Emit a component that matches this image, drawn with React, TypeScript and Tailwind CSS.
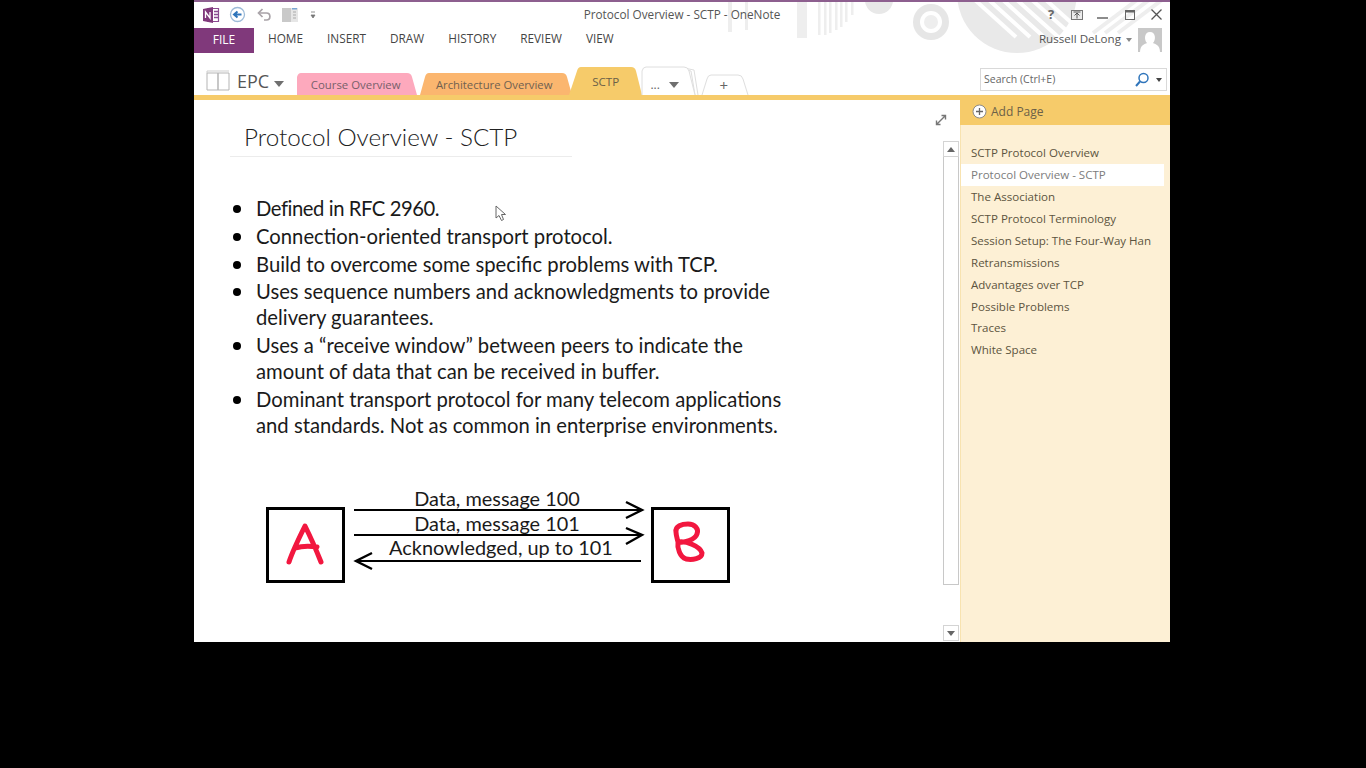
import React from 'react';

const ribbonTabs = ['HOME', 'INSERT', 'DRAW', 'HISTORY', 'REVIEW', 'VIEW'];
const pages = [
  'SCTP Protocol Overview',
  'Protocol Overview - SCTP',
  'The Association',
  'SCTP Protocol Terminology',
  'Session Setup: The Four-Way Han',
  'Retransmissions',
  'Advantages over TCP',
  'Possible Problems',
  'Traces',
  'White Space',
];
const bullets = [
  ['Defined in RFC 2960.'],
  ['Connection-oriented transport protocol.'],
  ['Build to overcome some specific problems with TCP.'],
  ['Uses sequence numbers and acknowledgments to provide', 'delivery guarantees.'],
  ['Uses a “receive window” between peers to indicate the', 'amount of data that can be received in buffer.'],
  ['Dominant transport protocol for many telecom applications', 'and standards. Not as common in enterprise environments.'],
];

function Backdrop() {
  return (
    <svg className="absolute left-0 top-0 pointer-events-none" width="976" height="56" viewBox="0 0 976 56">
      <g fill="#eeeeee">
        <rect x="534" y="0" width="4" height="32" />
        <rect x="551" y="0" width="3" height="30" />
        <rect x="603" y="0" width="10" height="38" />
        <rect x="624" y="0" width="2.5" height="35" />
        <rect x="630" y="0" width="2.5" height="35" />
        <rect x="635" y="0" width="2.5" height="33" />
        <rect x="641" y="0" width="2.5" height="30" />
        <rect x="646" y="0" width="2.5" height="27" />
        <rect x="651" y="0" width="2.5" height="22" />
        <rect x="657" y="0" width="2.5" height="15" />
      </g>
      <circle cx="685" cy="0" r="14" fill="#e8e8e8" />
      <circle cx="737" cy="22" r="18" fill="#e6e6e6" />
      <circle cx="737" cy="22" r="11" fill="#ffffff" />
      <circle cx="737" cy="22" r="7" fill="#eeeeee" />
      <circle cx="823" cy="-7" r="60" fill="#e9e9e9" />
      <g stroke="#ffffff" strokeWidth="4">
        <path d="M781 0 L822 37" />
        <path d="M795 0 L836 37" />
        <path d="M809 0 L850 37" />
        <path d="M823 0 L890 60" />
        <path d="M838 0 L890 46" />
        <path d="M852 0 L890 34" />
      </g>
      <g stroke="#eeeeee" strokeWidth="4">
        <path d="M899 33 L943 0" />
        <path d="M911 33 L955 0" />
        <path d="M924 33 L968 0" />
      </g>
    </svg>
  );
}

function OneNoteIcon() {
  return (
    <svg width="18" height="18" viewBox="0 0 18 18">
      <path d="M6 2.5 H16.5 V15.5 H6 Z" fill="#fff" stroke="#8b4a91" strokeWidth="1.2" />
      <path d="M12 5.5 h4 M12 8.5 h4 M12 11.5 h4" stroke="#8b4a91" strokeWidth="1.4" />
      <path d="M1 3 L11 1 V17 L1 15 Z" fill="#80397b" />
      <path d="M3.5 12 V6 L8 12 V6" stroke="#fff" strokeWidth="1.3" fill="none" />
    </svg>
  );
}

function QuickAccess() {
  return (
    <div className="flex items-center pl-[8px]">
      <OneNoteIcon />
      <svg className="ml-[9px]" width="17" height="17" viewBox="0 0 17 17">
        <circle cx="8.5" cy="8.5" r="7" fill="#fff" stroke="#9dbbd8" strokeWidth="1.3" />
        <path d="M12.5 8.5 H6 M8.5 5.5 L5 8.5 L8.5 11.5" fill="none" stroke="#2f75bb" strokeWidth="2" />
      </svg>
      <svg className="ml-[10px]" width="17" height="17" viewBox="0 0 17 17">
        <path d="M3 7 H10.5 C15 7 15 14 10.5 14 H8" fill="none" stroke="#a9a3a8" strokeWidth="1.7" />
        <path d="M6.5 3 L2.5 7 L6.5 11" fill="none" stroke="#a9a3a8" strokeWidth="1.7" />
      </svg>
      <svg className="ml-[9px]" width="16" height="14" viewBox="0 0 16 14">
        <rect x="0" y="0" width="9" height="14" fill="#c9c9c9" />
        <rect x="9" y="0" width="7" height="14" fill="#e6e6e6" />
        <rect x="10" y="0" width="5" height="1.5" fill="#7aa7d4" />
        <path d="M11 4 h3 M11 7 h3 M11 10 h3" stroke="#aaa" />
      </svg>
      <svg className="ml-[12px]" width="6" height="8" viewBox="0 0 6 8">
        <path d="M1 1 h4 M1 4 L5 4 L3 7 Z" stroke="#777" fill="#777" strokeWidth="0.8" />
      </svg>
    </div>
  );
}

function WindowControls() {
  return (
    <div className="flex items-center justify-end text-[#666]">
      <span className="w-[14px] text-center font-['Open_Sans',sans-serif] text-[13px] font-bold">?</span>
      <svg className="ml-[13px]" width="12" height="10" viewBox="0 0 12 10">
        <rect x="0.5" y="0.5" width="11" height="9" fill="#ececec" stroke="#777" />
        <path d="M6 8.5 V3.5 M3.5 5.5 L6 3 L8.5 5.5 M2.5 2 h7" fill="none" stroke="#555" />
      </svg>
      <svg className="ml-[14px]" width="11" height="11" viewBox="0 0 11 11">
        <path d="M0 9 H11" stroke="#666" strokeWidth="1.5" />
      </svg>
      <svg className="ml-[17px]" width="10" height="10" viewBox="0 0 10 10">
        <rect x="0.5" y="0.5" width="9" height="9" fill="none" stroke="#666" />
        <path d="M0 1.5 H10" stroke="#666" strokeWidth="2" />
      </svg>
      <svg className="ml-[16px] mr-[8px]" width="11" height="11" viewBox="0 0 11 11">
        <path d="M0.5 0.5 L10.5 10.5 M10.5 0.5 L0.5 10.5" stroke="#555" strokeWidth="1.3" />
      </svg>
    </div>
  );
}

function Caret({className}: {className?: string}) {
  return (
    <svg className={className} width="10" height="6" viewBox="0 0 10 6">
      <path d="M0 0 H10 L5 6 Z" fill="#6f6f6f" />
    </svg>
  );
}

function SectionTab(props: {
  label: string;
  width: number;
  height: number;
  left: number;
  right: number;
  fill: string;
  textClass: string;
  className?: string;
  stroke?: string;
  stacked?: boolean;
  children?: React.ReactNode;
}) {
  const {label, width, height, left, right, fill, textClass, className, stroke, stacked, children} = props;
  const path = `M0 ${height} L${left} 4 Q${left + 1} 0 ${left + 4} 0 L${width - right - 4} 0 Q${width - right} 0 ${width - right + 1} 4 L${width} ${height}`;
  return (
    <div className={`relative flex justify-center ${className ?? ''}`} style={{width, height}}>
      <svg className="absolute left-0 top-0 overflow-visible" width={width} height={height}>
        {stacked && (
          <path d={`M${width - right - 4} 1 L${width - 1} 3 L${width + 3} ${height}`} fill="none" stroke={stroke} />
        )}
        {stacked && (
          <path d={`M${width - right - 2} 3 L${width - 4} 4 L${width} ${height}`} fill="none" stroke={stroke} />
        )}
        <path d={path} fill={fill} stroke={stroke ?? 'none'} />
      </svg>
      <span className={`relative flex items-center gap-[9px] font-['Open_Sans',sans-serif] ${textClass}`}>
        {label}
        {children}
      </span>
    </div>
  );
}

function SectionBar() {
  return (
    <div className="flex h-[42px] items-end">
      <svg className="ml-[12px] mb-[4px]" width="24" height="21" viewBox="0 0 24 21">
        <path d="M1 3 H12 V20 H1 Z M12 3 H23 V20 H12 Z" fill="#fff" stroke="#b5b5b5" />
        <path d="M1 3 V1 H23" fill="none" stroke="#cfcfcf" />
      </svg>
      <span className="ml-[7px] mb-[1px] font-['Open_Sans',sans-serif] text-[18px] leading-[26px] text-[#555]">EPC</span>
      <Caret className="ml-[5px] mb-[8px]" />
      <div className="ml-[13px] flex items-end">
        <SectionTab label="Course Overview" width={120} height={22} left={0} right={6} fill="#fda9bd" textClass="mr-[3px] mt-[1px] text-[11.4px] leading-[21px] text-[#77606a]" />
        <SectionTab label="Architecture Overview" width={152} height={22} left={5} right={6} className="ml-[3px]" fill="#fbb66f" textClass="mr-[4px] mt-[1px] text-[11.3px] leading-[21px] text-[#70614f]" />
        <SectionTab label="SCTP" width={73} height={28} left={8} right={7} className="-ml-[3px]" fill="#f6cb6a" textClass="text-[11.6px] leading-[21px] text-[#6b6048]" />
        <SectionTab label="..." width={53} height={28} left={0} right={7} stacked fill="#fff" stroke="#dedede" textClass="mr-[8px] mt-[7px] text-[12px] leading-[21px] text-[#666]">
          <Caret />
        </SectionTab>
        <SectionTab label="+" width={46} height={20} left={5} right={6} className="ml-[7px]" fill="#fff" stroke="#dedede" textClass="mr-[3px] text-[15px] leading-[20px] text-[#666]" />
      </div>
      <div className="ml-auto mr-[3px] mb-[4px] flex h-[23px] w-[187px] items-center border border-[#d9d9d9] bg-white pl-[3px] pr-[4px]">
        <span className="flex-1 font-['Open_Sans',sans-serif] text-[10.5px] text-[#666]">Search (Ctrl+E)</span>
        <svg width="16" height="16" viewBox="0 0 16 16">
          <circle cx="9.5" cy="6" r="4.5" fill="none" stroke="#2f75bb" strokeWidth="1.5" />
          <path d="M6 9.5 L2 14" stroke="#2f75bb" strokeWidth="2" />
        </svg>
        <svg className="ml-[6px]" width="6" height="4" viewBox="0 0 6 4">
          <path d="M0 0 H6 L3 4 Z" fill="#444" />
        </svg>
      </div>
    </div>
  );
}

function Diagram() {
  const textClass = "font-['Lato',sans-serif] text-[19.9px] fill-[#1a1a1a]";
  return (
    <svg className="ml-[70px] mt-[48px]" width="470" height="100" viewBox="0 0 470 100">
      <g fill="none" stroke="#000">
        <rect x="3.5" y="22.5" width="76" height="73" strokeWidth="3" />
        <rect x="388.5" y="22.5" width="76" height="73" strokeWidth="3" />
        <path d="M90 24 H378 M90 49 H378 M377 75 H93" strokeWidth="2" />
        <path d="M362 16 L378 24 L362 32 M362 42 L378 49 L362 58 M108 67 L92 75 L108 83" strokeWidth="2.4" />
        <g stroke="#f2173f" strokeWidth="5" strokeLinecap="round" strokeLinejoin="round">
          <path d="M25 76 C29 64 36 50 41 40 C46 50 53 66 57 76 M31 62 C38 60 46 60 53 61" />
          <path d="M412 46 C411 40 418 38 424 38 C431 38 435 43 433 48 C431 54 420 57 415 56 C422 55 436 60 438 67 C438 73 428 74 422 73 C416 71 413 62 414 56 C413 52 412 49 412 46 Z" />
        </g>
      </g>
      <text x="233" y="20" textAnchor="middle" className={textClass}>Data, message 100</text>
      <text x="233" y="45" textAnchor="middle" className={textClass}>Data, message 101</text>
      <text x="237" y="69" textAnchor="middle" className={textClass}>Acknowledged, up to 101</text>
    </svg>
  );
}

function NotePage() {
  return (
    <div className="relative flex-1">
      <svg className="absolute left-[741px] top-[14px]" width="12" height="12" viewBox="0 0 12 12">
        <path d="M2 10 L10 2 M6.5 1.5 H10.5 V5.5 M1.5 6.5 V10.5 H5.5" fill="none" stroke="#777" strokeWidth="1.4" />
      </svg>
      <svg className="absolute left-[301px] top-[105px]" width="12" height="17" viewBox="0 0 12 17">
        <path d="M1 1 V13 L4 10.5 L6.5 15.5 L8.5 14.5 L6.5 9.5 L10.5 9.5 Z" fill="#fff" stroke="#666" />
      </svg>
      <div className="ml-[36px] mt-[21px] w-[342px] border-b border-[#ececec] pb-[4px] pl-[14px]">
        <h1 className="font-['Lato',sans-serif] text-[24.25px] font-light leading-[31px] text-[#222]">Protocol Overview - SCTP</h1>
      </div>
      <ul className="ml-[39px] mt-[38px] font-['Lato',sans-serif] text-[20.25px] leading-[26px] text-[#1a1a1a]">
        {bullets.map((lines, i) => (
          <li key={lines[0]} className={i === 0 ? 'mb-[1.75px] flex tracking-[-0.45px]' : 'mb-[1.75px] flex'}>
            <span className="mt-[10px] h-[8px] w-[8px] shrink-0 rounded-full bg-black" />
            <div className="ml-[15px]">
              {lines.map((line) => (
                <div key={line} className="whitespace-nowrap">{line}</div>
              ))}
            </div>
          </li>
        ))}
      </ul>
      <Diagram />
    </div>
  );
}

function Scrollbar() {
  return (
    <div className="mr-[1px] flex w-[16px] flex-col pt-[41px] pb-[1px]">
      <div className="flex h-[16px] items-center justify-center border border-[#d4d4d4] bg-white">
        <svg width="8" height="5" viewBox="0 0 8 5"><path d="M0 5 H8 L4 0 Z" fill="#666" /></svg>
      </div>
      <div className="h-[428px] border border-t-0 border-[#c8c8c8] bg-white" />
      <div className="flex-1" />
      <div className="flex h-[16px] items-center justify-center border border-[#d4d4d4] bg-white">
        <svg width="8" height="5" viewBox="0 0 8 5"><path d="M0 0 H8 L4 5 Z" fill="#666" /></svg>
      </div>
    </div>
  );
}

function PageList() {
  return (
    <div className="flex w-[210px] flex-col bg-[#fdf0d5] font-['Open_Sans',sans-serif] text-[11.55px] text-[#5c5440]">
      <div className="flex h-[25px] items-center bg-[#f6cb6a] pb-[2px] pl-[12px] text-[12px] text-[#6b6048]">
        <svg width="15" height="15" viewBox="0 0 15 15">
          <circle cx="7.5" cy="7.5" r="6.5" fill="#fff" stroke="#8a8a8a" />
          <path d="M7.5 4 V11 M4 7.5 H11" stroke="#666" strokeWidth="1.3" />
        </svg>
        <span className="ml-[4px]">Add Page</span>
      </div>
      <div className="flex flex-1 flex-col border-l border-[#f8e3b0] pt-[17px]">
        {pages.map((page, i) => (
          <div
            key={page}
            className={
              i === 1
                ? 'mr-[6px] flex h-[21.9px] items-center bg-white pl-[10px] text-[#7c7c7c]'
                : 'mr-[6px] flex h-[21.9px] items-center pl-[10px]'
            }
          >
            <span className="whitespace-nowrap">{page}</span>
          </div>
        ))}
      </div>
    </div>
  );
}

export default function App() {
  return (
    <div className="h-screen overflow-hidden bg-black pl-[194px]">
      <div className="relative flex h-[642px] w-[976px] flex-col bg-white">
        <Backdrop />
        <div className="relative h-[2px] bg-[#8d5f8f]" />
        <div className="relative grid h-[25px] grid-cols-[1fr_auto_1fr] items-center">
          <QuickAccess />
          <div className="font-['Open_Sans',sans-serif] text-[11.75px] text-[#555]">Protocol Overview - SCTP - OneNote</div>
          <WindowControls />
        </div>
        <div className="relative flex h-[26px] items-center">
          <div className="flex h-[25px] w-[60px] items-center justify-center bg-[#80397b] font-['Open_Sans',sans-serif] text-[12px] text-white">FILE</div>
          <div className="ml-[14px] mb-[2px] flex gap-[24px] font-['Open_Sans',sans-serif] text-[11.8px] text-[#444]">
            {ribbonTabs.map((tab) => (
              <div key={tab}>{tab}</div>
            ))}
          </div>
          <div className="ml-auto mr-[8px] flex items-center font-['Open_Sans',sans-serif] text-[11.6px] text-[#555]">
            <span className="mb-[2px]">Russell DeLong</span>
            <svg className="ml-[5px] mr-[6px]" width="6" height="4" viewBox="0 0 6 4"><path d="M0 0 H6 L3 4 Z" fill="#888" /></svg>
            <svg width="24" height="24" viewBox="0 0 24 24">
              <rect width="24" height="24" fill="#c8c8c8" />
              <path d="M2 24 C2 17 7 16 9 15 C6 12 6 4 12 4 C18 4 18 12 15 15 C17 16 22 17 22 24 Z" fill="#fff" />
            </svg>
          </div>
        </div>
        <div className="relative">
          <SectionBar />
        </div>
        <div className="relative h-[5px] bg-[#f6cb6a]" />
        <div className="relative flex flex-1">
          <NotePage />
          <Scrollbar />
          <PageList />
        </div>
      </div>
    </div>
  );
}
